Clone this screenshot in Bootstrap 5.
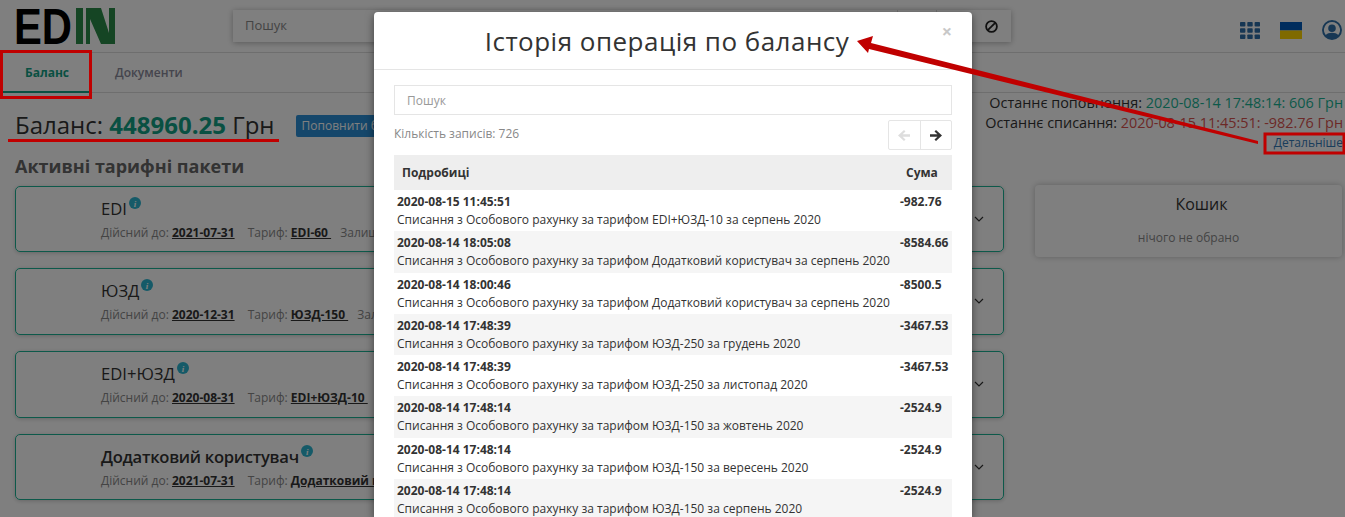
<!DOCTYPE html>
<html lang="uk">
  <head>
    <meta charset="UTF-8" />
    <meta name="viewport" content="width=device-width, initial-scale=1.0" />
    <title>Баланс - EDIN</title>
    <link href="https://cdn.jsdelivr.net/npm/bootstrap@5.3.0/dist/css/bootstrap.min.css" rel="stylesheet" />
    <style>
      html, body { height: 517px; overflow: hidden; }
      body { font-family: "Open Sans", "Noto Sans", sans-serif; color: #333; background: #fff; font-size: 14px; }
      .top-bar { height: 53px; border-bottom: 1px solid #ddd; padding: 8px 3px 0 17px; }
      .logo-svg { overflow: visible; }
      .search-box { margin-left: 118px; width: 778px; height: 32px; margin-top: 2px; background: #fff; box-shadow: 0 1px 6px rgba(0,0,0,.3); padding-left: 12px; color: #888; line-height: 31px; font-size: 13px; }
      .search-seg { width: 39px; border-left: 1px solid #ddd; }
      .search-end { width: 75px; padding-right: 13px; }
      .top-icons { gap: 20px; padding-top: 12px; }
      .tab-row { height: 40px; border-bottom: 1px solid #ddd; padding-left: 3px; font-size: 12px; }
      .tab-item { padding: 11px 22px 0; font-weight: 600; color: #8a8a9a; margin-right: 2px; height: 39px; }
      .tab-on { color: #12a085; border-bottom: 2px solid #12a085; height: 40px; font-weight: 700; }
      .main-wrap { padding: 0 2px 0 15px; }
      .sum-head { height: 64px; }
      .sum-text { font-size: 24px; line-height: 33px; margin-top: 15px; }
      .sum-value { color: #12a085; font-weight: 700; }
      .top-up { background: #2a8fd6; color: #fff; font-size: 12px; height: 22px; padding: 2px 6px; border-radius: 2px; margin: 22px 0 0 21px; white-space: nowrap; }
      .last-ops { margin-left: auto; text-align: right; line-height: 20px; white-space: nowrap; font-size: 14.42px; }
      .op-in { color: #1ab394; }
      .op-out { color: #d9534f; }
      .more-link { color: #337ab7; font-size: 12px; display: block; text-decoration: none; line-height: 20px; }
      .pack-title { font-size: 18px; font-weight: 700; color: #666; line-height: 24px; margin: -3px 0 7.6px; }
      .pack-col { width: 989px; flex: none; }
      .pack-card { height: 66.7px; margin-bottom: 16px; border: 1px solid #1ab394; border-radius: 5px; padding: 10px 0 0 85px; position: relative; box-shadow: 0 1px 4px rgba(0,0,0,.2); white-space: nowrap; }
      .pack-name { font-size: 16.6px; line-height: 24px; }
      .pack-long { font-weight: 600; letter-spacing: -.28px; }
      .pack-info { display: inline-block; vertical-align: 6px; margin-left: 2px; }
      .pack-meta { font-size: 12px; line-height: 17px; margin-top: 3px; color: #888; }
      .pack-meta b { color: #333; text-decoration: underline; margin-right: 10px; }
      .pack-meta b:last-of-type { margin-right: 6px; }
      .pack-arrow { position: absolute; right: 19px; top: 29px; }
      .cart-box { width: 307px; height: 72px; margin: -1px 0 0 31px; border-radius: 4px; box-shadow: 0 0 6px rgba(0,0,0,.25); text-align: center; padding-top: 7px; }
      .cart-title { font-size: 16px; line-height: 24px; padding-left: 26px; }
      .cart-note { font-size: 12px; color: #888; margin-top: 13px; }
      .dim-layer { position: absolute; inset: 0; background: rgba(0,0,0,.5); }
      .hist-modal { position: absolute; left: 374px; top: 12px; bottom: 0; width: 598px; overflow: hidden; background: #fff; border-radius: 4px 4px 0 0; box-shadow: 0 3px 9px rgba(0,0,0,.5); }
      .hist-head { height: 58px; border-bottom: 1px solid #e5e5e5; text-align: center; font-size: 26px; line-height: 58px; letter-spacing: .48px; position: relative; color: #333; padding-right: 12px; }
      .hist-close { position: absolute; right: 20px; top: 7px; font-size: 18px; font-weight: 700; line-height: 24px; color: #c8c8c8; letter-spacing: 0; }
      .hist-body { padding: 15px 20px; }
      .hist-search { height: 30px; border: 1px solid #e5e5e5; padding: 0 12px; line-height: 29px; font-size: 12px; color: #999; }
      .hist-bar { height: 40px; padding-top: 5px; }
      .hist-count { font-size: 12px; color: #888; line-height: 27px; }
      .page-btns { border: 1px solid #e5e5e5; border-radius: 2px; height: 30px; width: 64px; }
      .page-btns span { flex: 1; display: flex; align-items: center; justify-content: center; }
      .page-btns span + span { border-left: 1px solid #e5e5e5; }
      .hist-table { font-size: 12px; margin: 0; color: #333; table-layout: fixed; width: 558px; }
      .hist-table th { background: #eee; padding: 10px 8px; height: 35px; font-weight: 700; line-height: 15px; border: 0; }
      .hist-table th.col-sum { padding-left: 9px; }
      .hist-table td { padding: 3px 3px 2.25px; height: 41.25px; line-height: 18px; border: 0; background: transparent; vertical-align: top; }
      .hist-table tbody tr:nth-child(even) td { background: #f5f5f5; }
      .hist-table td:first-child { white-space: nowrap; }
      .col-sum { width: 55px; }
      .mark-layer { position: absolute; left: 0; top: 0; }
    </style>
  </head>
  <body>
    <div class="top-bar d-flex align-items-start">
      <svg class="logo-svg" width="98" height="36" viewBox="0 0 98 36">
        <text x="-3" y="36" font-family="Liberation Sans" font-weight="700" font-size="50" textLength="58" lengthAdjust="spacingAndGlyphs" fill="#000">ED</text>
        <path fill="#2a8a48" fill-rule="evenodd" d="M59 0h7v36h-7zM69 0h29v36H69zM73 11v25h11zM84 0l8 25V0z" />
      </svg>
      <div class="search-box d-flex">
        <span class="flex-grow-1">Пошук</span>
        <span class="search-seg"></span>
        <span class="search-seg search-end d-flex align-items-center justify-content-end">
          <svg width="13" height="13" viewBox="0 0 13 13" fill="none" stroke="#222" stroke-width="1.800"><circle cx="6.500" cy="6.500" r="5.400" /><path d="M2.800 10.200l7.400-7.400" /></svg>
        </span>
      </div>
      <div class="flex-grow-1"></div>
      <div class="top-icons d-flex align-items-center">
        <svg width="20" height="17" viewBox="0 0 20 17" fill="#2f6fa8"><rect width="5.400" height="4.600" rx=".8" /><rect x="7.300" width="5.400" height="4.600" rx=".8" /><rect x="14.600" width="5.400" height="4.600" rx=".8" /><rect y="6.200" width="5.400" height="4.600" rx=".8" /><rect x="7.300" y="6.200" width="5.400" height="4.600" rx=".8" /><rect x="14.600" y="6.200" width="5.400" height="4.600" rx=".8" /><rect y="12.400" width="5.400" height="4.600" rx=".8" /><rect x="7.300" y="12.400" width="5.400" height="4.600" rx=".8" /><rect x="14.600" y="12.400" width="5.400" height="4.600" rx=".8" /></svg>
        <svg width="22" height="17" viewBox="0 0 22 17"><rect width="22" height="8.500" fill="#005bbb" /><rect y="8.500" width="22" height="8.500" fill="#ffd500" /></svg>
        <svg width="20" height="20" viewBox="0 0 20 20" fill="#2f6fa8"><path fill-rule="evenodd" d="M10 0a10 10 0 1 0 0 20 10 10 0 0 0 0-20zm0 2a8 8 0 0 1 6.200 13c-1.300-1.500-3.600-2.300-6.200-2.300S5.100 13.500 3.800 15A8 8 0 0 1 10 2zm0 2.500a3.800 3.800 0 1 0 0 7.600 3.800 3.800 0 0 0 0-7.600z" /></svg>
      </div>
    </div>
    <div class="tab-row d-flex">
      <div class="tab-item tab-on">Баланс</div>
      <div class="tab-item">Документи</div>
    </div>
    <div class="main-wrap">
      <div class="sum-head d-flex">
        <div class="sum-text">Баланс: <span class="sum-value">448960.25</span> Грн</div>
        <div class="top-up">Поповнити баланс</div>
        <div class="last-ops">
          <div>Останнє поповнення: <span class="op-in">2020-08-14 17:48:14: 606 Грн</span></div>
          <div>Останнє списання: <span class="op-out">2020-08-15 11:45:51: -982.76 Грн</span></div>
          <a class="more-link" href="#">Детальніше</a>
        </div>
      </div>
      <div class="pack-title">Активні тарифні пакети</div>
      <div class="d-flex">
        <div class="pack-col" id="packs"></div>
        <div class="cart-box">
          <div class="cart-title">Кошик</div>
          <div class="cart-note">нічого не обрано</div>
        </div>
      </div>
    </div>
    <div class="dim-layer"></div>
    <div class="hist-modal">
      <div class="hist-head">Історія операція по балансу<span class="hist-close">×</span></div>
      <div class="hist-body">
        <div class="hist-search">Пошук</div>
        <div class="hist-bar d-flex justify-content-between align-items-start">
          <span class="hist-count">Кількість записів: 726</span>
          <div class="page-btns d-flex">
            <span><svg width="12" height="11" viewBox="0 0 12 11" fill="#ddd"><path d="M6 0l1.500 1.500L4.600 4.200H12v2.600H4.600l2.900 2.700L6 11 0 5.500z" /></svg></span>
            <span><svg width="12" height="11" viewBox="0 0 12 11" fill="#333"><path d="M6 0L4.500 1.500l2.900 2.700H0v2.600h7.400L4.500 9.500 6 11l6-5.500z" /></svg></span>
          </div>
        </div>
        <table class="table hist-table">
          <thead><tr><th>Подробиці</th><th class="col-sum">Сума</th></tr></thead>
          <tbody id="rows"></tbody>
        </table>
      </div>
    </div>
    <svg class="mark-layer" width="1345" height="517" fill="none" stroke="#c00000">
      <rect x="1.500" y="51.500" width="89" height="46" stroke-width="3" />
      <path d="M8 140.500H279" stroke-width="3" />
      <rect x="1265" y="134" width="79" height="19" stroke-width="3" />
      <path d="M857 41L873 36L871 43L1258 141L1258 144L869 49L868 53z" fill="#c00000" stroke="none" />
    </svg>
    <script>
      const info = '<svg class="pack-info" width="12" height="12" viewBox="0 0 12 12"><circle cx="6" cy="6" r="6" fill="#2bb5d0"/><text x="6" y="9.500" font-size="9" font-style="italic" font-weight="700" font-family="Liberation Serif" text-anchor="middle" fill="#fff">i</text></svg>';
      const arrow = '<svg class="pack-arrow" width="10" height="6" viewBox="0 0 10 6" fill="none" stroke="#333" stroke-width="1.200"><path d="M1 1l4 4 4-4"/></svg>';
      const packs = [
        ["EDI", "2021-07-31", "EDI-60", "Залишок"],
        ["ЮЗД", "2020-12-31", "ЮЗД-150", "Залишок"],
        ["EDI+ЮЗД", "2020-08-31", "EDI+ЮЗД-10", ""],
        ["Додатковий користувач", "2021-07-31", "Додатковий кор.", ""],
      ];
      document.getElementById("packs").innerHTML = packs.map((p) => `
        <div class="pack-card">
          <div class="pack-name${p[0].length > 10 ? " pack-long" : ""}">${p[0]}${info}</div>
          <div class="pack-meta">Дійсний до: <b>${p[1]}</b> Тариф: <b>${p[2]}&nbsp;</b> ${p[3]}</div>
          ${arrow}
        </div>`).join("");
      const desc = "Списання з Особового рахунку за тарифом ";
      const rows = [
        ["2020-08-15 11:45:51", "EDI+ЮЗД-10 за серпень 2020", "-982.76"],
        ["2020-08-14 18:05:08", "Додатковий користувач за серпень 2020", "-8584.66"],
        ["2020-08-14 18:00:46", "Додатковий користувач за серпень 2020", "-8500.5"],
        ["2020-08-14 17:48:39", "ЮЗД-250 за грудень 2020", "-3467.53"],
        ["2020-08-14 17:48:39", "ЮЗД-250 за листопад 2020", "-3467.53"],
        ["2020-08-14 17:48:14", "ЮЗД-150 за жовтень 2020", "-2524.9"],
        ["2020-08-14 17:48:14", "ЮЗД-150 за вересень 2020", "-2524.9"],
        ["2020-08-14 17:48:14", "ЮЗД-150 за серпень 2020", "-2524.9"],
      ];
      document.getElementById("rows").innerHTML = rows.map((r) =>
        `<tr><td><b>${r[0]}</b><br>${desc}${r[1]}</td><td><b>${r[2]}</b></td></tr>`).join("");
    </script>
    <script src="https://cdn.jsdelivr.net/npm/bootstrap@5.3.0/dist/js/bootstrap.bundle.min.js"></script>
  </body>
</html>
